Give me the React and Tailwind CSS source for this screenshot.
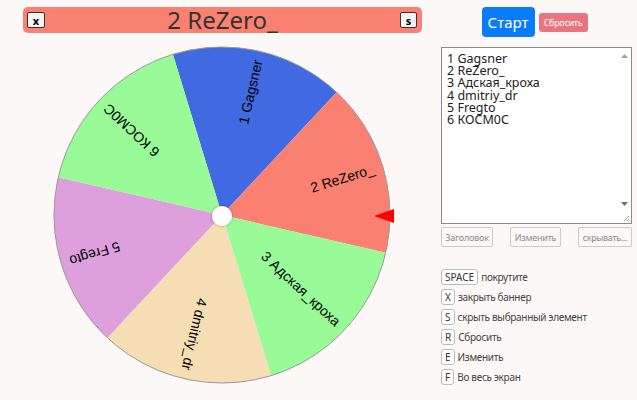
import React from "react";

const CX = 222;
const CY = 175;
const R = 168;

const segments = [
  { label: "1 Gagsner", color: "#4169e1" },
  { label: "2 ReZero_", color: "#fa8072" },
  { label: "3 Адская_кроха", color: "#98fb98" },
  { label: "4 dmitriy_dr", color: "#f5deb3" },
  { label: "5 Fregto", color: "#dda0dd" },
  { label: "6 КОСМ0С", color: "#98fb98" },
];

const START = 253; // degrees, clockwise from the pointer side

function pt(deg, r) {
  const a = (deg * Math.PI) / 180;
  return [CX + r * Math.cos(a), CY + r * Math.sin(a)];
}

function Wheel() {
  const step = 360 / segments.length;
  return (
    <svg width="441" height="360" className="block">
      <defs>
        <filter id="hubShadow" x="-50%" y="-50%" width="200%" height="200%">
          <feDropShadow dx="0" dy="0" stdDeviation="1.6" floodColor="#000" floodOpacity="0.35" />
        </filter>
      </defs>
      {segments.map((s, i) => {
        const a0 = START + i * step;
        const a1 = a0 + step;
        const [x0, y0] = pt(a0, R);
        const [x1, y1] = pt(a1, R);
        return (
          <path
            key={s.label}
            d={`M${CX},${CY} L${x0},${y0} A${R},${R} 0 0 1 ${x1},${y1} Z`}
            fill={s.color}
          />
        );
      })}
      <circle cx={CX} cy={CY} r={R} fill="none" stroke="#9a9a9a" strokeWidth="1" />
      {segments.map((s, i) => {
        const mid = START + i * step + step / 2;
        return (
          <text
            key={s.label}
            x={CX + R - 9}
            y={CY}
            transform={`rotate(${mid} ${CX} ${CY})`}
            textAnchor="end"
            dominantBaseline="central"
            fontSize="14"
            fontFamily="'Liberation Sans', Arial, sans-serif"
            fill="#000"
          >
            {s.label}
          </text>
        );
      })}
      <circle cx={CX} cy={CY + 1} r="10" fill="#fff" filter="url(#hubShadow)" />
      <polygon points="374,176 394,169 394,183" fill="#ff0000" />
    </svg>
  );
}

function Key({ children }) {
  return (
    <span className="inline-flex h-[16px] items-center justify-center rounded-[3px] border border-[#bdbdbd] bg-white px-[3px] text-[10px] leading-none text-[#333]">
      {children}
    </span>
  );
}

const hints = [
  ["SPACE", "покрутите"],
  ["X", "закрыть баннер"],
  ["S", "скрыть выбранный элемент"],
  ["R", "Сбросить"],
  ["E", "Изменить"],
  ["F", "Во весь экран"],
];

export default function App() {
  return (
    <div
      className="flex h-[400px] w-[637px] overflow-hidden bg-[#fdf8f8]"
      style={{ fontFamily: "'Noto Sans', 'Open Sans', sans-serif" }}
    >
      <div className="flex w-[441px] flex-col">
        <div className="ml-[23px] mt-[7px] flex h-[26px] w-[399px] items-center justify-between rounded-[5px] bg-[#fa8072] pl-[4px] pr-[5px]">
          <span className="flex h-[16px] w-[18px] items-center justify-center rounded-[2px] border border-[#333] bg-[#f3f3f3] text-[11px] font-bold leading-none text-black">
            x
          </span>
          <span className="text-[24px] leading-none text-[#333]">2 ReZero_</span>
          <span className="flex h-[16px] w-[17px] items-center justify-center rounded-[2px] border border-[#333] bg-[#f3f3f3] text-[11px] font-bold leading-none text-black">
            s
          </span>
        </div>
        <div className="mt-[7px]">
          <Wheel />
        </div>
      </div>

      <div className="flex w-[191px] flex-col">
        <div className="mt-[7px] flex h-[30px] items-center justify-center gap-[4px] pr-[4px]">
          <button className="h-[30px] w-[53px] rounded-[4px] bg-[#0a7cf8] text-[15px] leading-none text-white">
            Старт
          </button>
          <button className="h-[19px] w-[49px] rounded-[3px] bg-[#e8757f] text-[9px] leading-none tracking-[-0.3px] text-white">
            Сбросить
          </button>
        </div>

        <div className="relative mt-[10px] h-[177px] w-[191px] border border-[#8a8a8a] bg-white">
          <div className="whitespace-pre pl-[5px] pt-[5px] text-[12.5px] leading-[12.2px] text-[#222]">
            {"1 Gagsner\n2 ReZero_\n3 Адская_кроха\n4 dmitriy_dr\n5 Fregto\n6 КОСМ0С"}
          </div>
          <svg className="absolute right-[2px] top-[5px]" width="9" height="6">
            <polygon points="1,5 8,5 4.5,1" fill="#a3a3a3" />
          </svg>
          <svg className="absolute bottom-[16px] right-[2px]" width="9" height="6">
            <polygon points="1,1 8,1 4.5,5" fill="#6f6f6f" />
          </svg>
          <svg className="absolute bottom-[1px] right-[1px]" width="8" height="8">
            <line x1="7" y1="2" x2="2" y2="7" stroke="#9a9a9a" strokeWidth="1" />
            <line x1="7" y1="5" x2="5" y2="7" stroke="#9a9a9a" strokeWidth="1" />
          </svg>
        </div>

        <div className="mt-[3px] flex justify-between">
          <button className="h-[20px] w-[52px] rounded-[2px] border border-[#cbcbcb] text-[9px] leading-none tracking-[-0.2px] text-[#8a8a8a]">
            Заголовок
          </button>
          <button className="h-[20px] w-[51px] rounded-[2px] border border-[#cbcbcb] text-[9px] leading-none tracking-[-0.2px] text-[#8a8a8a]">
            Изменить
          </button>
          <button className="h-[20px] w-[54px] rounded-[2px] border border-[#cbcbcb] text-[9px] leading-none tracking-[-0.3px] text-[#8a8a8a]">
            скрывать...
          </button>
        </div>

        <div className="mt-[22px] flex flex-col gap-[4px]">
          {hints.map(([k, t]) => (
            <div key={k} className="flex h-[16px] items-center gap-[3px]">
              <Key>{k}</Key>
              <span className="text-[10px] leading-none tracking-[-0.3px] text-[#444]">{t}</span>
            </div>
          ))}
        </div>
      </div>
    </div>
  );
}
